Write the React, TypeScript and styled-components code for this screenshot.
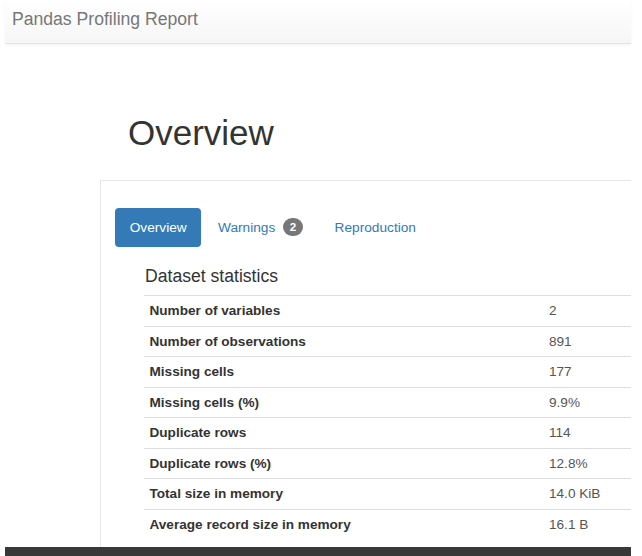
import React from "react";
import styled, { createGlobalStyle } from "styled-components";

const GlobalStyle = createGlobalStyle`
  html, body { margin: 0; padding: 0; background: #fff; }
  body { font-family: "Liberation Sans", Arial, Helvetica, sans-serif; color: #333; overflow: hidden; }
`;

const Page = styled.div`
  width: 626px;
  margin-left: 5px;
`;

const Navbar = styled.header`
  box-sizing: border-box;
  height: 44px;
  padding: 8.5px 0 0 7px;
  background: linear-gradient(to bottom, #ffffff 0%, #f6f6f6 100%);
  border-bottom: 1px solid #e3e3e3;
  box-shadow: 0 1px 3px rgba(0, 0, 0, 0.05);
`;

const Brand = styled.span`
  font-size: 17.6px;
  line-height: 20px;
  color: #777;
`;

const PageTitle = styled.h1`
  margin: 70.4px 0 0 123px;
  font-size: 35px;
  line-height: 38.5px;
  font-weight: 400;
  color: #333;
`;

const Panel = styled.section`
  box-sizing: border-box;
  margin: 27px 0 0 95px;
  border-left: 1px solid #e6e6e6;
  border-top: 1px solid #e6e6e6;
  padding: 27px 0 7.5px 14px;
`;

const Tabs = styled.nav`
  display: flex;
  gap: 2px;
`;

const Tab = styled.span<{ $active?: boolean }>`
  display: inline-flex;
  align-items: center;
  height: 39px;
  box-sizing: border-box;
  padding: 0 14.65px;
  border-radius: 4px;
  font-size: 13.7px;
  line-height: 19.5px;
  color: ${(p) => (p.$active ? "#fff" : "#337ab7")};
  background: ${(p) => (p.$active ? "#337ab7" : "transparent")};
`;

const Badge = styled.span`
  display: inline-block;
  margin-left: 7.5px;
  min-width: 20.5px;
  box-sizing: border-box;
  padding: 3px 6.8px;
  border-radius: 10px;
  background: #777;
  color: #fff;
  font-size: 11.7px;
  font-weight: 700;
  line-height: 12px;
  text-align: center;
`;

const TabContent = styled.div`
  margin: 20px 0 0 29px;
`;

const SectionTitle = styled.h4`
  margin: 0 0 9.1px 1px;
  font-size: 17.6px;
  line-height: 19.4px;
  font-weight: 400;
  color: #333;
`;

const StatsTable = styled.div`
  display: flex;
  flex-direction: column;
`;

const Row = styled.div`
  display: grid;
  grid-template-columns: 400px 1fr;
  border-top: 1px solid #dddddd;
  font-size: 13.6px;
  line-height: 19.5px;
`;

const Label = styled.div`
  padding: 5px 5px 5px 5.5px;
  font-weight: 700;
  color: #333;
`;

const Value = styled.div`
  padding: 5px;
  color: #555;
`;

const Footer = styled.div`
  height: 20px;
  background: #383838;
`;

const stats: [string, string][] = [
  ["Number of variables", "2"],
  ["Number of observations", "891"],
  ["Missing cells", "177"],
  ["Missing cells (%)", "9.9%"],
  ["Duplicate rows", "114"],
  ["Duplicate rows (%)", "12.8%"],
  ["Total size in memory", "14.0 KiB"],
  ["Average record size in memory", "16.1 B"],
];

export default function App() {
  return (
    <Page>
      <GlobalStyle />
      <Navbar>
        <Brand>Pandas Profiling Report</Brand>
      </Navbar>
      <PageTitle>Overview</PageTitle>
      <Panel>
        <Tabs>
          <Tab $active>Overview</Tab>
          <Tab>
            Warnings <Badge>2</Badge>
          </Tab>
          <Tab>Reproduction</Tab>
        </Tabs>
        <TabContent>
          <SectionTitle>Dataset statistics</SectionTitle>
          <StatsTable>
            {stats.map(([k, v]) => (
              <Row key={k}>
                <Label>{k}</Label>
                <Value>{v}</Value>
              </Row>
            ))}
          </StatsTable>
        </TabContent>
      </Panel>
      <Footer />
    </Page>
  );
}
